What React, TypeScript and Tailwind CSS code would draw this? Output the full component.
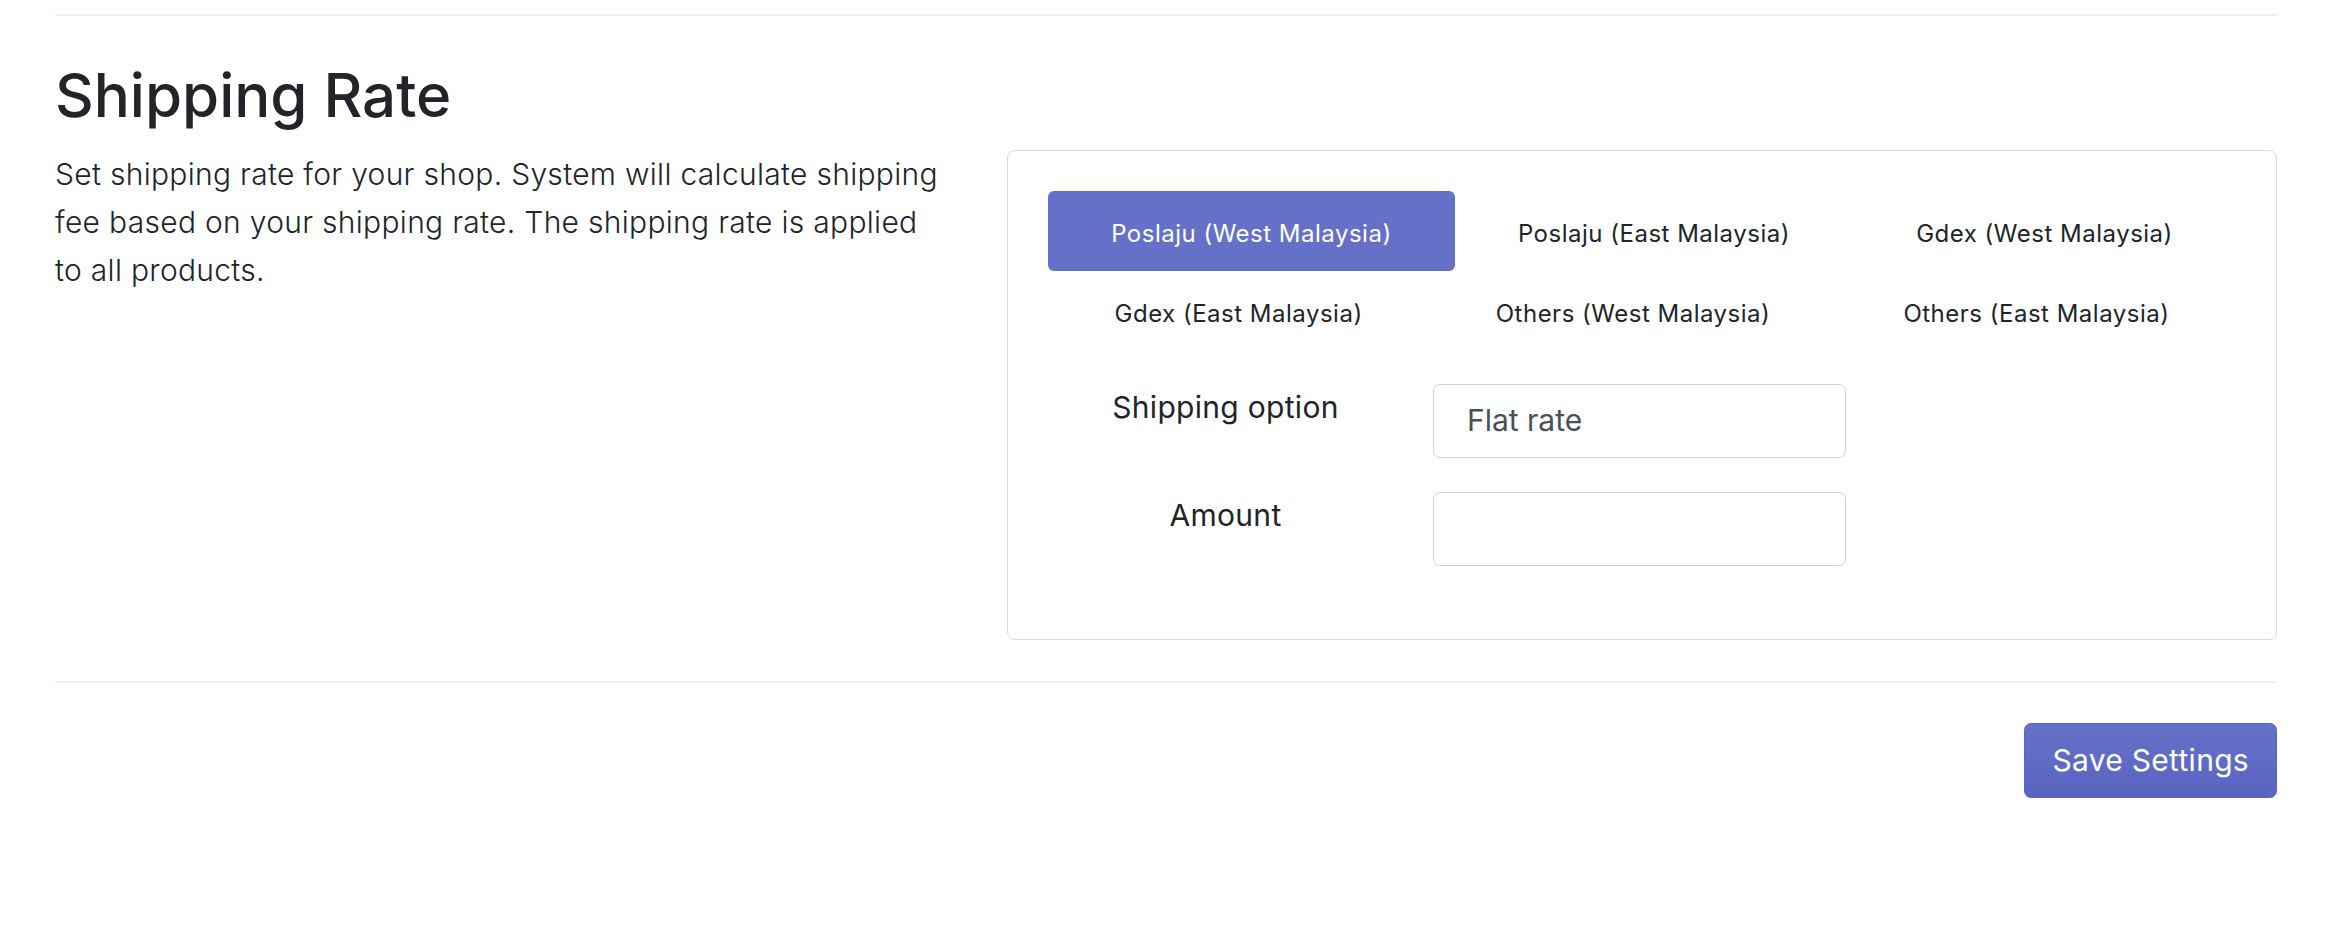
import React from "react";

const tabsRow1 = ["Poslaju (West Malaysia)", "Poslaju (East Malaysia)", "Gdex (West Malaysia)"];
const tabsRow2 = ["Gdex (East Malaysia)", "Others (West Malaysia)", "Others (East Malaysia)"];

function Tab({ label, active }: { label: string; active?: boolean }) {
  return (
    <div
      className={
        "flex-auto text-center px-[42px] pt-[25px] pb-[19px] text-[24px] leading-[36px] tracking-[0.5px] rounded-[6px] whitespace-nowrap " +
        (active ? "bg-[#6571c9] text-white" : "text-[#212529]")
      }
    >
      {label}
    </div>
  );
}

export default function App() {
  return (
    <div
      className="w-[2349px] h-[936px] bg-white text-[#212529]"
      style={{ fontFamily: "Inter, 'Noto Sans', sans-serif" }}
    >
      <div className="mx-[55px] w-[2222px] pt-[14px]">
        <div className="h-[2px] bg-[#f0f0f0]" />
        <h1 className="mt-[43px] text-[60px] leading-[72px] font-medium">Shipping Rate</h1>
        <div className="mt-[19px] flex justify-between items-start">
          <p className="w-[892px] text-[30px] leading-[48px] font-light tracking-[0.3px]">
            Set shipping rate for your shop. System will calculate shipping fee based on your shipping rate. The
            shipping rate is applied to all products.
          </p>
          <div className="w-[1270px] border-[1.5px] border-[#d9dadd] rounded-[8px] px-[40px] pt-[40px] pb-[73px]">
            <div className="flex">
              {tabsRow1.map((t, i) => (
                <Tab key={t} label={t} active={i === 0} />
              ))}
            </div>
            <div className="flex">
              {tabsRow2.map((t) => (
                <Tab key={t} label={t} />
              ))}
            </div>
            <div className="mt-[33px] flex flex-col gap-[34px]">
              <div className="flex items-start">
                <div className="w-[355px] pt-[1px] text-center text-[30px] leading-[45px] tracking-[0.3px]">Shipping option</div>
                <div className="ml-[30px] w-[413px] h-[74px] border-[1.5px] border-[#ced4da] rounded-[7px] px-[33px] py-[13px] text-[30px] leading-[45px] text-[#495057]">
                  Flat rate
                </div>
              </div>
              <div className="flex items-start">
                <div className="w-[355px] pt-[1px] text-center text-[30px] leading-[45px] tracking-[0.3px]">Amount</div>
                <div className="ml-[30px] w-[413px] h-[74px] border-[1.5px] border-[#ced4da] rounded-[7px]" />
              </div>
            </div>
          </div>
        </div>
        <div className="mt-[41px] h-[2px] bg-[#f0f0f0]" />
        <div className="mt-[40px] flex justify-end">
          <button className="h-[75px] px-[27px] rounded-[7px] text-white text-[30px] leading-[45px] tracking-[0.3px] bg-gradient-to-b from-[#6672c8] to-[#5864c1] border border-[#5a66c2]">
            Save Settings
          </button>
        </div>
      </div>
    </div>
  );
}
